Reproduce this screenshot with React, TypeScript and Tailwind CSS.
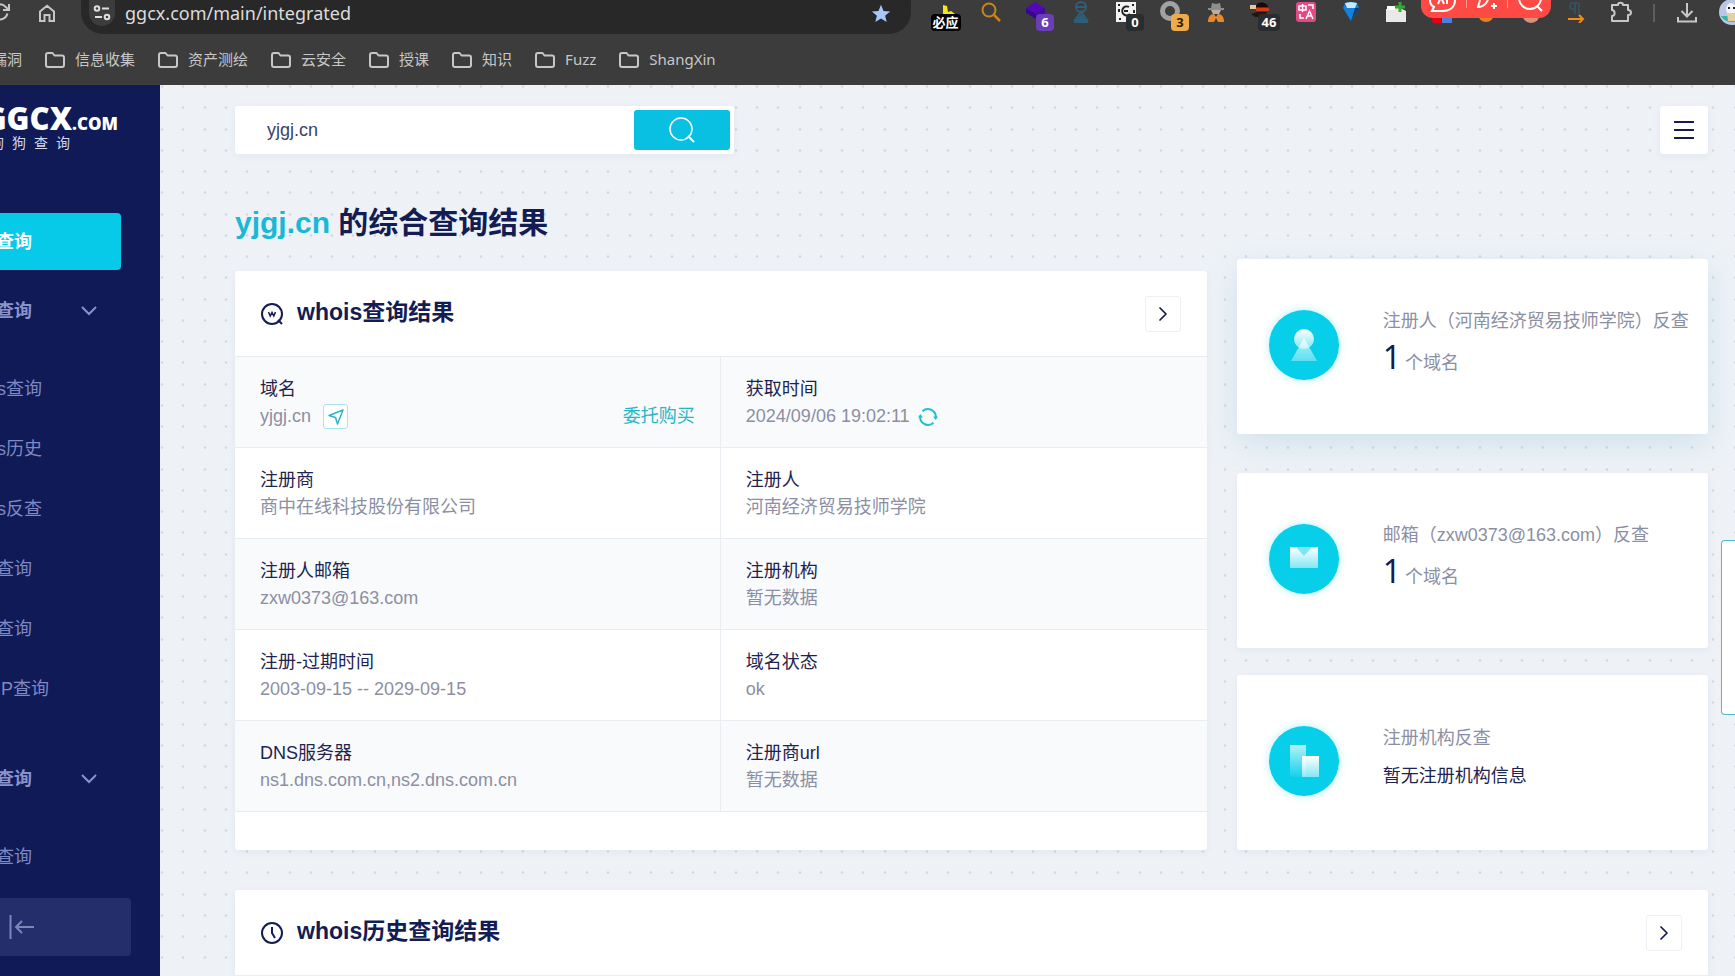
import React from 'react';
import { ChevronRight } from 'lucide-react';

interface RecordItem {
  label: string;
  value: string;
  action?: 'visit' | 'refresh';
  link?: string;
}

interface ReverseCardProps {
  title: string;
  count?: number;
  empty?: string;
  lifted?: boolean;
  children: React.ReactNode;
}

const bookmarks = ['信息收集', '资产测绘', '云安全', '授课', '知识', 'Fuzz', 'ShangXin'];

const whoisLinks = ['whois查询', 'whois历史', 'whois反查', '备案查询', '权重查询', '域名IP查询'];

const records: RecordItem[] = [
  { label: '域名', value: 'yjgj.cn', action: 'visit', link: '委托购买' },
  { label: '获取时间', value: '2024/09/06 19:02:11', action: 'refresh' },
  { label: '注册商', value: '商中在线科技股份有限公司' },
  { label: '注册人', value: '河南经济贸易技师学院' },
  { label: '注册人邮箱', value: 'zxw0373@163.com' },
  { label: '注册机构', value: '暂无数据' },
  { label: '注册-过期时间', value: '2003-09-15 -- 2029-09-15' },
  { label: '域名状态', value: 'ok' },
  { label: 'DNS服务器', value: 'ns1.dns.com.cn,ns2.dns.com.cn' },
  { label: '注册商url', value: '暂无数据' },
];

const FolderIcon = () => (
  <svg viewBox="0 0 20 16" className="h-4 w-5 shrink-0" fill="none" stroke="#c7c7c7" strokeWidth="2" strokeLinejoin="round">
    <path d="M1 3a2 2 0 0 1 2-2h4.5l2 2.5H17a2 2 0 0 1 2 2V13a2 2 0 0 1-2 2H3a2 2 0 0 1-2-2z" />
  </svg>
);

const Extension: React.FC<{ label: string; badge?: string; badgeClass?: string; children?: React.ReactNode }> = ({
  label,
  badge,
  badgeClass,
  children,
}) => (
  <button type="button" aria-label={label} className="relative flex h-6 w-[45px] shrink-0 items-center justify-center">
    <svg viewBox="0 0 22 22" className="h-[22px] w-[22px]" fill="none">
      {children}
    </svg>
    {badge && (
      <span className={`absolute top-[14px] flex h-[17px] items-center justify-center rounded-[4px] text-[13px] leading-none font-bold ${badgeClass}`}>
        {badge}
      </span>
    )}
  </button>
);

const Toolbar = () => (
  <div className="flex h-[34px] items-start">
    <button type="button" aria-label="reload" className="-ml-2.5 flex h-6 w-5 shrink-0 items-center">
      <svg viewBox="0 0 20 20" className="h-5 w-5" fill="none" stroke="#c7c7c7" strokeWidth="2">
        <path d="M17.4 11.5A7.6 7.6 0 1 1 15.6 4.8L18.500 7.600" />
        <path d="M19 2v6h-6" />
      </svg>
    </button>
    <button type="button" aria-label="home" className="ml-7 flex h-[26px] w-[18px] shrink-0 items-center">
      <svg viewBox="0 0 18 18" className="h-[18px] w-[18px]" fill="none" stroke="#c7c7c7" strokeWidth="2">
        <path d="M2 7.500 9 1.800l7 5.700V17h-4.500v-6h-5v6H2z" />
      </svg>
    </button>
    <div className="ml-[25px] flex h-[34px] min-w-0 flex-1 items-start rounded-b-[22px] bg-[#282828] pr-5 pl-2">
      <span className="flex h-[26px] w-[26px] shrink-0 items-center justify-center rounded-b-full bg-[#3c3c3c]">
        <svg viewBox="0 0 18 16" className="h-4 w-[18px]" fill="none" stroke="#dedede" strokeWidth="2">
          <circle cx="4" cy="3.500" r="2.300" />
          <path d="M9 3.500h7M2 12h7" />
          <circle cx="14" cy="12" r="2.300" />
        </svg>
      </span>
      <input
        aria-label="address"
        defaultValue="ggcx.com/main/integrated"
        className="ml-2.5 h-[26px] min-w-0 flex-1 bg-transparent text-lg text-[#dcdcdc] outline-none"
      />
      <svg viewBox="0 0 20 20" className="mt-1 h-5 w-5 shrink-0" fill="#a8c7fa">
        <path d="m10 .8 2.500 6.100 6.600.5-5 4.300 1.600 6.400L10 14.600l-5.700 3.500 1.600-6.400-5-4.300 6.600-.5z" />
      </svg>
    </div>
    <div className="ml-3 flex shrink-0">
      <Extension label="bing" badge="必应" badgeClass="w-[30px] bg-black text-white">
        <path d="M8 4v9h12l-4-3-3 1-1-6z" fill="#f5e61a" />
      </Extension>
      <Extension label="search">
        <circle cx="9" cy="9" r="6.500" stroke="#c9851f" strokeWidth="2" />
        <path d="m14 14 6 6" stroke="#c9851f" strokeWidth="2.500" />
      </Extension>
      <Extension label="layers" badge="6" badgeClass="left-[23px] w-[18px] bg-[#6a3fb5] text-white">
        <path d="m10 1 10 6-9 6L1 7z" fill="#5407b8" />
        <path d="m1 7 10 6v5L1 12z" fill="#37078a" />
        <path d="m11 13 9-6v5l-9 6z" fill="#450aa0" />
      </Extension>
      <Extension label="timer">
        <g stroke="#2d6078" strokeWidth="2">
          <circle cx="11" cy="6" r="5" />
          <path d="M6 6h10M11 11l-6 8h12zM4 21h14" />
          <path d="M8 18h6l-3-3z" fill="#2d6078" />
        </g>
      </Extension>
      <Extension label="qr" badge="0" badgeClass="left-[23px] w-[18px] bg-[#2a2d30] text-white">
        <path d="M1 1h20v20H1z" fill="#f2f2f2" />
        <path d="M3 3h2v2H3zM17 3h2v2h-2zM4 17h2v2H4zM3 8h2v3H3zM18 9h2v3h-2z" fill="#222" />
        <path d="M14 6a4.500 4.500 0 1 0 1 7M9 10h4" stroke="#222" strokeWidth="2" />
      </Extension>
      <Extension label="ring" badge="3" badgeClass="left-[23px] w-[18px] bg-[#efab48] text-[#2b1c05]">
        <circle cx="10" cy="10" r="7.500" stroke="#a2a2a2" strokeWidth="5" />
      </Extension>
      <Extension label="detective">
        <path d="m7 2 4 1 4-1 1 5h3v2H3V7h3z" fill="#8e8e8e" />
        <path d="M6 9h10l-2 4h-6z" fill="#b5b0a8" />
        <path d="M3 21c0-5 2-8 6-8l2 3 2-3c4 0 6 3 6 8h-6l-2-4-2 4z" fill="#e8892e" />
      </Extension>
      <Extension label="burger" badge="46" badgeClass="left-[20px] w-[22px] bg-[#2a2d30] text-white">
        <path d="M6 6c0-7 12-5 12 0z" fill="#1c0a08" />
        <path d="M6 7h13v3H6z" fill="#d43a1c" />
        <path d="M0 4h6v4H0z" fill="#efc79b" />
        <path d="M7 11h10l-3 5H5l-4-3z" fill="#201816" />
      </Extension>
      <Extension label="translate">
        <rect x="1" y="1" width="20" height="20" rx="3" fill="#e04a85" />
        <path d="M4 5h7v4H4zM7.500 3v8M13 4h5v4M5 13v4h4M11 18l3.500-8 3.500 8M12.500 15h4" stroke="#fff" strokeWidth="1.500" />
      </Extension>
      <Extension label="gem">
        <path d="m5 2 6-1 6 1 2 5-8 13L3 7z" fill="#1382dc" />
        <path d="m5 2 6-1 6 1-2 5H7z" fill="#c7eaff" />
        <path d="m11 20 8-13h-4z" fill="#0a3c7a" />
      </Extension>
      <Extension label="package">
        <path d="M1 8h8l2-3 10 5v11H1z" fill="#e9e9e9" />
        <path d="M2 5h8v4H2z" fill="#fff" />
        <path d="M15 1v10M10 6h10" stroke="#36a832" strokeWidth="3" />
      </Extension>
      <Extension label="flag">
        <path d="M1 12h10v11H3z" fill="#e60012" />
        <path d="M12 12h10v11H12z" fill="#4c7ee0" />
      </Extension>
      <Extension label="fox">
        <circle cx="11" cy="13" r="8" fill="#e8801f" />
      </Extension>
      <Extension label="face">
        <circle cx="11" cy="13" r="9" fill="#d9917c" />
      </Extension>
      <Extension label="redirect">
        <path d="M13 2H8a3 3 0 0 0 0 6h2M10 2v11M14 2v11" stroke="#34505c" strokeWidth="2" />
        <path d="M3 18h14M14 14l4 4-4 4" stroke="#ee8c1c" strokeWidth="2" />
      </Extension>
      <Extension label="extensions">
        <path
          d="M2 4h6c0-3 5-3 5 0h5v5c4 0 4 5 0 5v6H2v-5c3 0 4-5 0-6z"
          stroke="#c7c7c7"
          strokeWidth="2"
          strokeLinejoin="round"
        />
      </Extension>
    </div>
    <span className="mt-1 ml-2.5 h-[18px] w-0.5 shrink-0 bg-[#5e5e5e]" />
    <button type="button" aria-label="downloads" className="ml-[22px] flex h-[26px] w-5 shrink-0 items-center">
      <svg viewBox="0 0 20 20" className="h-5 w-5" fill="none" stroke="#c7c7c7" strokeWidth="2">
        <path d="M10 0v13M4.500 8l5.500 5.500L15.500 8M1 14v4.500h18V14" />
      </svg>
    </button>
    <span className="ml-[22px] w-4 shrink-0">
      <svg viewBox="0 0 26 26" className="h-[26px] w-[26px]">
        <circle cx="13" cy="12" r="13" fill="#b9c6e4" />
        <path d="M2 16h22a13 13 0 0 1-22 0z" fill="#2fb8a2" />
        <ellipse cx="12" cy="9" rx="5" ry="6" fill="#f4f4f4" />
        <path d="M8 13h9v8H9z" fill="#e6cfa3" />
        <path d="M9 7h2v2H9zM14 7h2v2h-2z" fill="#222" />
      </svg>
    </span>
  </div>
);

const CaptureBar = () => (
  <div className="absolute top-0 right-[184px] flex h-[18px] w-[130px] items-start justify-between overflow-hidden rounded-b-[12px] bg-[#fd4a44] px-2">
    <svg viewBox="0 0 28 14" className="h-[14px] w-7" fill="none" stroke="#fff" strokeWidth="2">
      <path d="M1 0c0 4 2 6 4 7l-2 4h10c8 0 13-4 13-11" />
      <path d="m9 4 3-7 3 7M18 0v4" />
    </svg>
    <span className="h-2 w-px bg-[#ff9a96]" />
    <svg viewBox="0 0 22 12" className="h-3 w-[22px]" fill="none" stroke="#fff" strokeWidth="2">
      <path d="M4 0 2 7c4 0 8-3 10-7M18 3v6M15 6h6" />
    </svg>
    <span className="h-2 w-px bg-[#ff9a96]" />
    <svg viewBox="0 0 26 14" className="h-[14px] w-[26px]" fill="none" stroke="#fff" strokeWidth="2">
      <circle cx="13" cy="-2" r="11" />
      <path d="m20 6 5 5" />
    </svg>
  </div>
);

const BrowserChrome = () => (
  <header className="relative h-[85px] shrink-0 overflow-hidden bg-[#3c3c3c] font-['Noto_Sans','Noto_Sans_CJK_SC',sans-serif]">
    <Toolbar />
    <CaptureBar />
    <nav className="-ml-2 flex h-[51px] items-center gap-[23px] text-[15px] whitespace-nowrap text-[#c7c7c7]">
      <a href="#bookmark">漏洞</a>
      {bookmarks.map((name) => (
        <a key={name} href="#bookmark" className="flex items-center gap-2.5">
          <FolderIcon />
          {name}
        </a>
      ))}
    </nav>
  </header>
);

const MenuGroup: React.FC<{ title: string; links: string[] }> = ({ title, links }) => (
  <div>
    <button type="button" className="flex h-[57px] w-full items-center justify-between pr-6 text-lg font-bold">
      {title}
      <svg viewBox="0 0 16 10" className="h-2.5 w-4" fill="none" stroke="currentColor" strokeWidth="2">
        <path d="m1 1 7 7 7-7" />
      </svg>
    </button>
    <ul className="pt-5 text-lg text-[#7f88c4]">
      {links.map((link) => (
        <li key={link}>
          <a href="#menu" className="flex h-[60px] items-center whitespace-nowrap">
            {link}
          </a>
        </li>
      ))}
    </ul>
  </div>
);

/* the drawer is slid partly past the left edge of the window */
const Sidebar = () => (
  <aside className="w-40 shrink-0 overflow-hidden bg-[#0f1a56]">
    <div className="-ml-10 flex h-full w-[200px] flex-col pr-[39px] text-[#8a92cc]">
      <div className="flex h-[128px] shrink-0 flex-col pt-[18px] text-white">
        <div className="flex w-[158px] items-baseline justify-end font-['Open_Sans','Noto_Sans',sans-serif] leading-[30px] font-extrabold">
          <span className="text-[31px]">GGCX</span>
          <span className="text-[17px] leading-none">.COM</span>
        </div>
        <div className="mt-0.5 flex gap-2 pl-[30px] text-[14px] leading-4 text-[#d5d8ec]">
          {['狗', '狗', '查', '询'].map((char, i) => (
            <span key={i}>{char}</span>
          ))}
        </div>
      </div>
      <a href="#menu" className="mb-3 flex h-[57px] shrink-0 items-center rounded-[4px] bg-[#07c9e8] text-lg font-bold text-white">
        综合查询
      </a>
      <MenuGroup title="域名查询" links={whoisLinks} />
      <div className="mt-[31px]">
        <MenuGroup title="其他查询" links={['历史查询']} />
      </div>
      <button type="button" aria-label="collapse" className="mt-auto -mr-2.5 mb-5 flex h-[58px] shrink-0 items-center rounded-[4px] bg-[#232e6a] pl-[49px]">
        <svg viewBox="0 0 25 24" className="h-6 w-[25px]" fill="none" stroke="#7d86ba" strokeWidth="2">
          <path d="M1.500 0v24M25 12H7M13 6l-6 6 6 6" />
        </svg>
      </button>
    </div>
  </aside>
);

const DotField = () => (
  <svg className="absolute inset-0 h-full w-full" aria-hidden="true">
    <defs>
      <pattern id="dots" width="85" height="85" patternUnits="userSpaceOnUse">
        {[2, 23, 45, 66].map((x) =>
          [1, 22, 44, 65].map((y) => <circle key={`${x}-${y}`} cx={x} cy={y + 0.5} r="1.3" fill="#d3d8e0" />)
        )}
      </pattern>
    </defs>
    <rect width="100%" height="100%" fill="url(#dots)" />
  </svg>
);

const CardHeader: React.FC<{ title: string; children: React.ReactNode }> = ({ title, children }) => (
  <div className="flex h-[86px] items-center border-b border-[#e9edf2] px-[26px]">
    <svg viewBox="0 0 22 22" className="h-[22px] w-[22px]" fill="none" stroke="#131c53" strokeWidth="2">
      {children}
    </svg>
    <h2 className="ml-3.5 flex-1 pb-0.5 text-[23px] font-bold text-[#131c53]">{title}</h2>
    <button type="button" aria-label={title} className="flex h-9 w-9 items-center justify-center rounded-[3px] border border-[#eceff4] text-[#131c53]">
      <ChevronRight className="h-6 w-6" strokeWidth={1.75} />
    </button>
  </div>
);

const RecordCell: React.FC<{ item: RecordItem }> = ({ item }) => (
  <div className="h-[91px] border-b border-[#e9edf2] px-[25px] pt-[19px] text-lg leading-[27px] odd:border-r">
    <dt className="text-[#1d2450]">{item.label}</dt>
    <dd className="flex items-center text-[#8c8fa3]">
      {item.value}
      {item.action === 'visit' && (
        <button type="button" aria-label="访问" className="ml-3 flex h-[25px] w-[25px] items-center justify-center rounded-[3px] border border-[#a5e6ef] bg-white">
          <svg viewBox="0 0 16 16" className="h-4 w-4" fill="none" stroke="#2bb6c8" strokeWidth="1.5" strokeLinejoin="round">
            <path d="M15 1 1 6.500l6.500 2L9.500 15z" />
          </svg>
        </button>
      )}
      {item.action === 'refresh' && (
        <button type="button" aria-label="刷新" className="ml-2">
          <svg viewBox="0 0 20 20" className="h-5 w-5" fill="none" stroke="#1fc3cf" strokeWidth="2">
            <path d="M4.500 4.200A8 8 0 0 1 17.900 10M15.500 15.800A8 8 0 0 1 2.100 10" />
            <path d="M15 9.500h5L17.700 13zM5 10.500H0L2.300 7z" fill="#1fc3cf" stroke="none" />
          </svg>
        </button>
      )}
      {item.link && (
        <a href="#buy" className="ml-auto text-[#2bb6c8]">
          {item.link}
        </a>
      )}
    </dd>
  </div>
);

const ReverseCard: React.FC<ReverseCardProps> = ({ title, count, empty, lifted, children }) => (
  <article
    className={`flex h-[175px] items-center rounded-[3px] bg-white pl-8 ${
      lifted ? '-mt-3 mb-3 shadow-[0_10px_30px_rgba(120,180,205,0.25)]' : 'shadow-[0_2px_6px_rgba(140,160,190,0.12)]'
    }`}
  >
    <span className="mb-1 flex h-[70px] w-[70px] shrink-0 items-center justify-center rounded-full bg-[#07cfea] shadow-[0_0_8px_rgba(7,207,234,0.3)]">
      <svg viewBox="0 0 32 36" className="h-9 w-8">
        {children}
      </svg>
    </span>
    <div className="ml-11 text-lg whitespace-nowrap text-[#8c8fa3]">
      <h3 className="leading-[27px]">{title}</h3>
      {count !== undefined ? (
        <p className="flex items-baseline gap-1 leading-[44px]">
          <span className="font-['Noto_Sans',sans-serif] text-[32px] text-[#131c53]">{count}</span>
          个域名
        </p>
      ) : (
        <p className="leading-[48px] text-[#1d2450]">{empty}</p>
      )}
    </div>
  </article>
);

export default function App() {
  return (
    <div className="relative flex h-screen flex-col overflow-hidden bg-[#eef2f7] font-['Liberation_Sans','Noto_Sans_CJK_SC',sans-serif]">
      <svg className="absolute h-0 w-0" aria-hidden="true">
        <defs>
          <linearGradient id="fade" x1="0" y1="0" x2="0" y2="1">
            <stop offset="0" stopColor="#fff" />
            <stop offset="1" stopColor="#fff" stopOpacity="0.5" />
          </linearGradient>
          <linearGradient id="fadeOut" x1="0" y1="0" x2="0" y2="1">
            <stop offset="0" stopColor="#fff" stopOpacity="0.7" />
            <stop offset="1" stopColor="#fff" stopOpacity="0.05" />
          </linearGradient>
        </defs>
      </svg>
      <BrowserChrome />
      <div className="flex min-h-0 flex-1">
        <Sidebar />
        <main className="relative min-w-0 flex-1 overflow-hidden">
          <DotField />
          <div className="relative pt-[21px] pr-[27px] pl-[75px]">
            <div className="flex items-center justify-between">
              <form className="flex h-12 w-[499px] items-center rounded-[3px] bg-white pr-1 shadow-[0_2px_6px_rgba(140,160,190,0.12)]">
                <input aria-label="域名" defaultValue="yjgj.cn" className="h-full min-w-0 flex-1 px-8 text-lg text-[#3c4163] outline-none" />
                <button type="button" aria-label="查询" className="flex h-10 w-24 items-center justify-center rounded-[3px] bg-[#09bfe2]">
                  <svg viewBox="0 0 26 26" className="h-[26px] w-[26px]" fill="none" stroke="#fff" strokeWidth="1.5">
                    <circle cx="12" cy="12" r="11" />
                    <path d="m19 19 6 6" strokeWidth="2" />
                  </svg>
                </button>
              </form>
              <button type="button" aria-label="菜单" className="flex h-12 w-12 flex-col items-center justify-center gap-1.5 rounded-[3px] bg-white shadow-[0_2px_6px_rgba(140,160,190,0.12)]">
                <span className="h-0.5 w-5 bg-[#131c53]" />
                <span className="h-0.5 w-5 bg-[#131c53]" />
                <span className="h-0.5 w-5 bg-[#131c53]" />
              </button>
            </div>

            <h1 className="mt-[46px] mb-[25px] text-[30px] leading-[46px] font-bold text-[#131c53]">
              <span className="text-[#1bb8d6]">yjgj.cn</span> 的综合查询结果
            </h1>

            <div className="flex items-start gap-[30px]">
              <section className="min-w-0 flex-1 rounded-[3px] bg-white pb-[38px] shadow-[0_2px_6px_rgba(140,160,190,0.12)]">
                <CardHeader title="whois查询结果">
                  <path d="m17 17 4 4" />
                  <circle cx="11" cy="11" r="10" />
                  <path d="m7.500 9 1.700 4L11 9.500l1.800 3.500L14.500 9" strokeWidth="1.500" />
                </CardHeader>
                <dl className="grid grid-cols-2 *:nth-[4n+1]:bg-[#f8fafc] *:nth-[4n+2]:bg-[#f8fafc]">
                  {records.map((item) => (
                    <RecordCell key={item.label} item={item} />
                  ))}
                </dl>
              </section>

              <div className="flex w-[32%] flex-col gap-[27px]">
                <ReverseCard title="注册人（河南经济贸易技师学院）反查" count={1} lifted>
                  <circle cx="16" cy="12" r="10" fill="url(#fade)" />
                  <path d="M16 11 29 34H3z" fill="url(#fade)" opacity="0.7" />
                </ReverseCard>
                <ReverseCard title="邮箱（zxw0373@163.com）反查" count={1}>
                  <path d="M2 6h28v21H2z" fill="url(#fade)" />
                  <path d="M8 6h16l-8 9z" fill="#7fe3f1" />
                </ReverseCard>
                <ReverseCard title="注册机构反查" empty="暂无注册机构信息">
                  <path d="M2 2h16v32H2z" fill="url(#fadeOut)" />
                  <path d="M14 13h17v21H14z" fill="url(#fade)" />
                </ReverseCard>
              </div>
            </div>

            <section className="mt-10 rounded-[3px] bg-white pb-10 shadow-[0_2px_6px_rgba(140,160,190,0.12)]">
              <CardHeader title="whois历史查询结果">
                <circle cx="11" cy="11" r="10" />
                <path d="M11 5v6l3 5" />
              </CardHeader>
            </section>
          </div>
        </main>
      </div>
      <div className="absolute top-[540px] right-0 h-[175px] w-3.5 rounded-l-[4px] border border-r-0 border-[#4fbdca] bg-white" />
    </div>
  );
}
